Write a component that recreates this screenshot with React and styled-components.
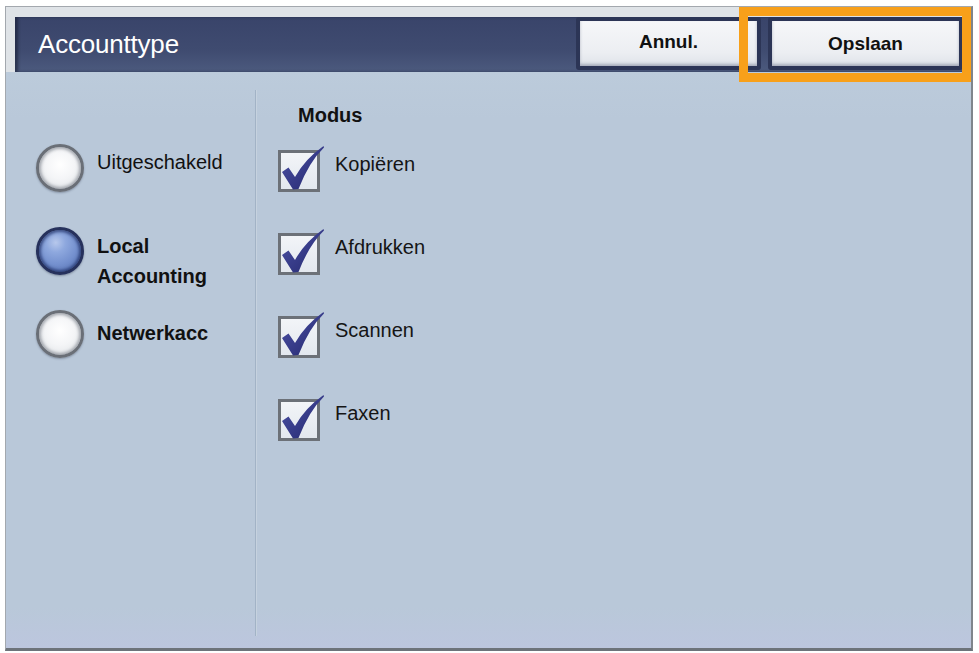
import React from "react";
import styled, { createGlobalStyle } from "styled-components";

const GlobalStyle = createGlobalStyle`
  html, body {
    margin: 0;
    padding: 0;
    background: #ffffff;
  }
  body {
    font-family: "Liberation Sans", Arial, sans-serif;
  }
`;

const modes = ["Kopiëren", "Afdrukken", "Scannen", "Faxen"];

const Page = styled.div`
  padding: 6px 0 0 5px;
`;

const Frame = styled.div`
  box-sizing: border-box;
  width: 968px;
  height: 645px;
  display: flex;
  flex-direction: column;
  background: #dfe3e7;
  border: 1px solid #a3a8ae;
  border-right: 2px solid #7f858c;
  border-bottom: 3px solid #6d737a;
`;

const HeaderWrap = styled.div`
  position: relative;
  padding: 10px 8px 0 9px;
`;

const Header = styled.div`
  height: 55px;
  display: flex;
  align-items: center;
  background: linear-gradient(#39446a, #3f4b70 60%, #4c5a7e);
  box-shadow: inset 3px 0 3px rgba(15, 20, 40, 0.5);
`;

const Title = styled.div`
  flex: 1;
  padding-left: 23px;
  color: #ffffff;
  font-size: 26px;
  letter-spacing: -0.2px;
`;

const ButtonGroup = styled.div`
  align-self: flex-start;
  display: flex;
  gap: 7px;
`;

const ButtonSlot = styled.div`
  position: relative;
`;

const Button = styled.div`
  box-sizing: border-box;
  width: ${(p) => p.$width}px;
  height: 53px;
  display: flex;
  align-items: center;
  justify-content: center;
  padding-bottom: ${(p) => p.$lift}px;
  border: 4px solid #2c3556;
  border-radius: 3px;
  background: linear-gradient(#f6f7f9, #eceef2 70%, #dfe3e9);
  box-shadow: inset 0 -2px 3px rgba(60, 70, 100, 0.35);
  color: #111111;
  font-size: 19px;
  font-weight: bold;
`;

const Highlight = styled.div`
  position: absolute;
  left: -29px;
  top: -10px;
  right: -8px;
  bottom: -12px;
  border: 9px solid #f8a01a;
  pointer-events: none;
`;

const Body = styled.div`
  flex: 1;
  display: flex;
  background: linear-gradient(#bccbdb, #b9c8d9 8%, #b9c8d9 93%, #bcc6de);
`;

const LeftColumn = styled.div`
  width: 249px;
  padding: 72px 0 0 30px;
  box-sizing: border-box;
`;

const Divider = styled.div`
  width: 1px;
  margin: 18px 0 12px;
  background: #a2b3c6;
  box-shadow: 1px 0 0 #c6d2df;
`;

const RightColumn = styled.div`
  flex: 1;
  padding: 31px 0 0 22px;
`;

const RadioRow = styled.div`
  height: 83px;
  display: flex;
  align-items: flex-start;
  gap: 13px;
`;

const Radio = styled.div`
  flex: none;
  box-sizing: border-box;
  width: 48px;
  height: 48px;
  border-radius: 50%;
  border: 3px solid ${(p) => (p.$on ? "#26315c" : "#6a6f77")};
  background: ${(p) =>
    p.$on
      ? "radial-gradient(circle at 40% 30%, #b7c8ec 0%, #8ea8de 25%, #7591cf 55%, #5a76b7 85%)"
      : "radial-gradient(circle at 50% 42%, #ffffff 0%, #f4f5f7 45%, #e4e7ea 80%)"};
  box-shadow: ${(p) =>
    p.$on
      ? "inset 0 0 3px 2px rgba(30, 45, 100, 0.7), 0 1px 2px rgba(40, 50, 70, 0.4)"
      : "inset 0 0 3px 2px rgba(120, 125, 135, 0.6), 0 1px 2px rgba(40, 50, 70, 0.35)"};
`;

const RadioLabel = styled.div`
  padding-top: ${(p) => p.$top}px;
  font-size: 20px;
  line-height: 30px;
  font-weight: ${(p) => (p.$bold ? "bold" : "normal")};
  color: #111111;
`;

const SectionTitle = styled.div`
  margin-left: 20px;
  font-size: 20px;
  line-height: 24px;
  font-weight: bold;
  color: #111111;
`;

const ModeList = styled.div`
  margin-top: 18px;
`;

const ModeRow = styled.div`
  height: 83px;
  display: flex;
  align-items: flex-start;
  gap: 11px;
`;

const ModeLabel = styled.div`
  padding-top: 4px;
  font-size: 20px;
  line-height: 30px;
  color: #151515;
`;

const CheckIcon = () => (
  <svg width="46" height="47" viewBox="0 0 46 47">
    <defs>
      <linearGradient id="boxFill" x1="0" y1="0" x2="0" y2="1">
        <stop offset="0" stopColor="#f3f5f8" />
        <stop offset="1" stopColor="#e2e7ee" />
      </linearGradient>
      <linearGradient id="tick" x1="0" y1="0" x2="1" y2="1">
        <stop offset="0" stopColor="#4d52a8" />
        <stop offset="1" stopColor="#23276c" />
      </linearGradient>
    </defs>
    <rect x="1.5" y="6.5" width="39" height="39" fill="url(#boxFill)" stroke="#6c7178" strokeWidth="3" />
    <path
      d="M4 27 L10.5 22.5 L17 32 Q27 14 45.5 1 L46 2.5 Q31 17 20.5 44 L15 44.5 Z"
      fill="url(#tick)"
    />
  </svg>
);

export default function App() {
  return (
    <Page>
      <GlobalStyle />
      <Frame>
        <HeaderWrap>
          <Header>
            <Title>Accounttype</Title>
            <ButtonGroup>
              <ButtonSlot>
                <Button $width={185} $lift={4}>Annul.</Button>
              </ButtonSlot>
              <ButtonSlot>
                <Button $width={195} $lift={0}>Opslaan</Button>
                <Highlight />
              </ButtonSlot>
            </ButtonGroup>
          </Header>
        </HeaderWrap>
        <Body>
          <LeftColumn>
            <RadioRow>
              <Radio />
              <RadioLabel $top={3}>Uitgeschakeld</RadioLabel>
            </RadioRow>
            <RadioRow>
              <Radio $on />
              <RadioLabel $top={4} $bold>
                Local
                <br />
                Accounting
              </RadioLabel>
            </RadioRow>
            <RadioRow>
              <Radio />
              <RadioLabel $top={8} $bold>Netwerkacc</RadioLabel>
            </RadioRow>
          </LeftColumn>
          <Divider />
          <RightColumn>
            <SectionTitle>Modus</SectionTitle>
            <ModeList>
              {modes.map((mode) => (
                <ModeRow key={mode}>
                  <CheckIcon />
                  <ModeLabel>{mode}</ModeLabel>
                </ModeRow>
              ))}
            </ModeList>
          </RightColumn>
        </Body>
      </Frame>
    </Page>
  );
}
